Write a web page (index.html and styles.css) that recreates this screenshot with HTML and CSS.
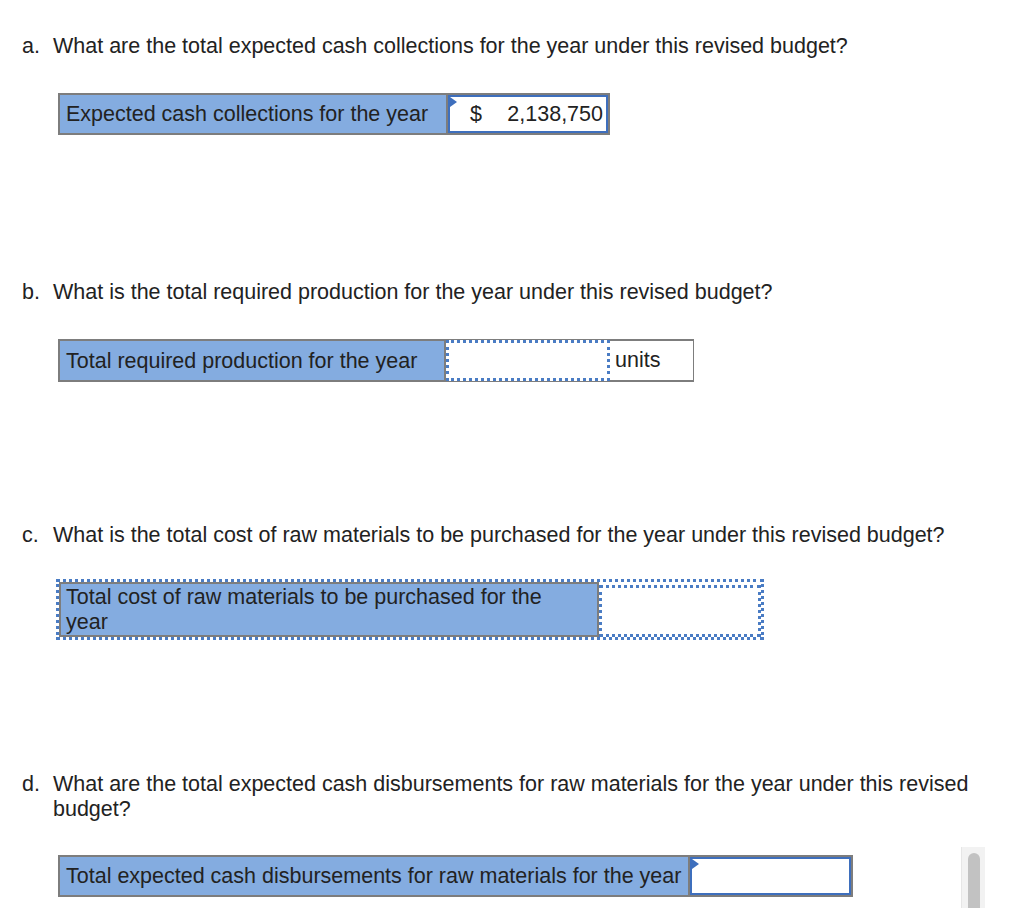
FILE: index.html
```html
<!DOCTYPE html>
<html>
<head>
<meta charset="utf-8">
<link rel="stylesheet" href="styles.css">
</head>
<body>
<div class="page">
  <div class="q q-a"><span class="num">a.</span><span class="qt">What are the total expected cash collections for the year under this revised budget?</span></div>
  <div class="tbl tbl-a">
    <div class="lbl">Expected cash collections for the year</div>
    <div class="inp solid marked"><span class="cur">$</span><span class="val">2,138,750</span></div>
  </div>

  <div class="q q-b"><span class="num">b.</span><span class="qt">What is the total required production for the year under this revised budget?</span></div>
  <div class="tbl tbl-b">
    <div class="lbl">Total required production for the year</div>
    <div class="inp dotted"></div>
    <div class="unit">units</div>
  </div>

  <div class="q q-c"><span class="num">c.</span><span class="qt">What is the total cost of raw materials to be purchased for the year under this revised budget?</span></div>
  <div class="tbl-c-wrap">
    <div class="tbl tbl-c">
      <div class="lbl">Total cost of raw materials to be purchased for the year</div>
      <div class="inp dotted"></div>
    </div>
  </div>

  <div class="q q-d"><span class="num">d.</span><span class="qt">What are the total expected cash disbursements for raw materials for the year under this revised budget?</span></div>
  <div class="tbl tbl-d">
    <div class="lbl">Total expected cash disbursements for raw materials for the year</div>
    <div class="inp solid marked"></div>
  </div>
</div>
<div class="scroll"><div class="thumb"></div></div>
</body>
</html>
```

FILE: styles.css
```css
html, body {
  margin: 0;
  padding: 0;
  background: #ffffff;
}
body {
  font-family: "Liberation Sans", Arial, sans-serif;
  color: #222222;
  font-size: 21.5px;
  width: 1024px;
  height: 908px;
  overflow: hidden;
  position: relative;
}
.page {
  padding-top: 34px;
}
.q {
  display: flex;
  padding-left: 22px;
  line-height: 25px;
  width: 960px;
}
.num {
  width: 31px;
  flex: none;
}
.qt {
  flex: 1;
}
.tbl {
  display: flex;
  margin-left: 58px;
  border: 2px solid #7d7d7d;
  box-sizing: border-box;
  background: #ffffff;
}
.lbl {
  background: #84ace0;
  border-right: 2px solid #7d7d7d;
  padding: 0 6px;
  display: flex;
  align-items: center;
  line-height: 24px;
  box-sizing: border-box;
}
.inp {
  position: relative;
  box-sizing: border-box;
  background: #ffffff;
}
.solid {
  border: 2px solid #3e6fbd;
}
.dotted {
  border: 3px dotted #4a7cc4;
}
.marked::before {
  content: "";
  position: absolute;
  left: 0;
  top: 0;
  border-top: 5px solid transparent;
  border-bottom: 5px solid transparent;
  border-left: 7px solid #3e6fbd;
}
.tbl-a {
  margin-top: 34px;
  width: 552px;
  height: 42px;
}
.tbl-a .lbl { width: 388px; }
.tbl-a .inp {
  width: 160px;
  display: flex;
  align-items: center;
  justify-content: space-between;
  padding: 0 3px 0 20px;
}
.q-b { margin-top: 145px; }
.tbl-b {
  margin-top: 34px;
  width: 636px;
  height: 43px;
  border-right-width: 1px;
}
.tbl-b .lbl { width: 386px; }
.tbl-b .inp { width: 164px; margin-top: -1px; margin-bottom: -1px; }
.tbl-b .unit {
  flex: 1;
  display: flex;
  align-items: center;
  padding-left: 5px;
}
.q-c { margin-top: 141px; }
.tbl-c-wrap {
  margin-top: 31px;
  margin-left: 56px;
  width: 708px;
  height: 61px;
  border: 3px dotted #4a7cc4;
  box-sizing: border-box;
}
.tbl-c {
  margin-left: 0;
  height: 55px;
  border: none;
  background: transparent;
}
.tbl-c .lbl {
  width: 540px;
  align-items: center;
  border: 2px solid #7d7d7d;
  padding: 0 40px 0 5px;
  line-height: 25px;
}
.tbl-c .inp { flex: 1; margin-top: 3px; }
.q-d { margin-top: 132px; }
.tbl-d {
  margin-top: 33px;
  width: 795px;
  height: 42px;
}
.tbl-d .lbl { width: 630px; }
.tbl-d .inp { flex: 1; }
.scroll {
  position: absolute;
  left: 961px;
  top: 847px;
  width: 24px;
  height: 70px;
  background: #f2f2f2;
  border-left: 1px solid #e6e6e6;
  box-sizing: border-box;
}
.thumb {
  position: absolute;
  left: 6px;
  top: 6px;
  width: 12px;
  height: 70px;
  background: #c2c2c2;
  border-radius: 6px 6px 0 0;
}
```
